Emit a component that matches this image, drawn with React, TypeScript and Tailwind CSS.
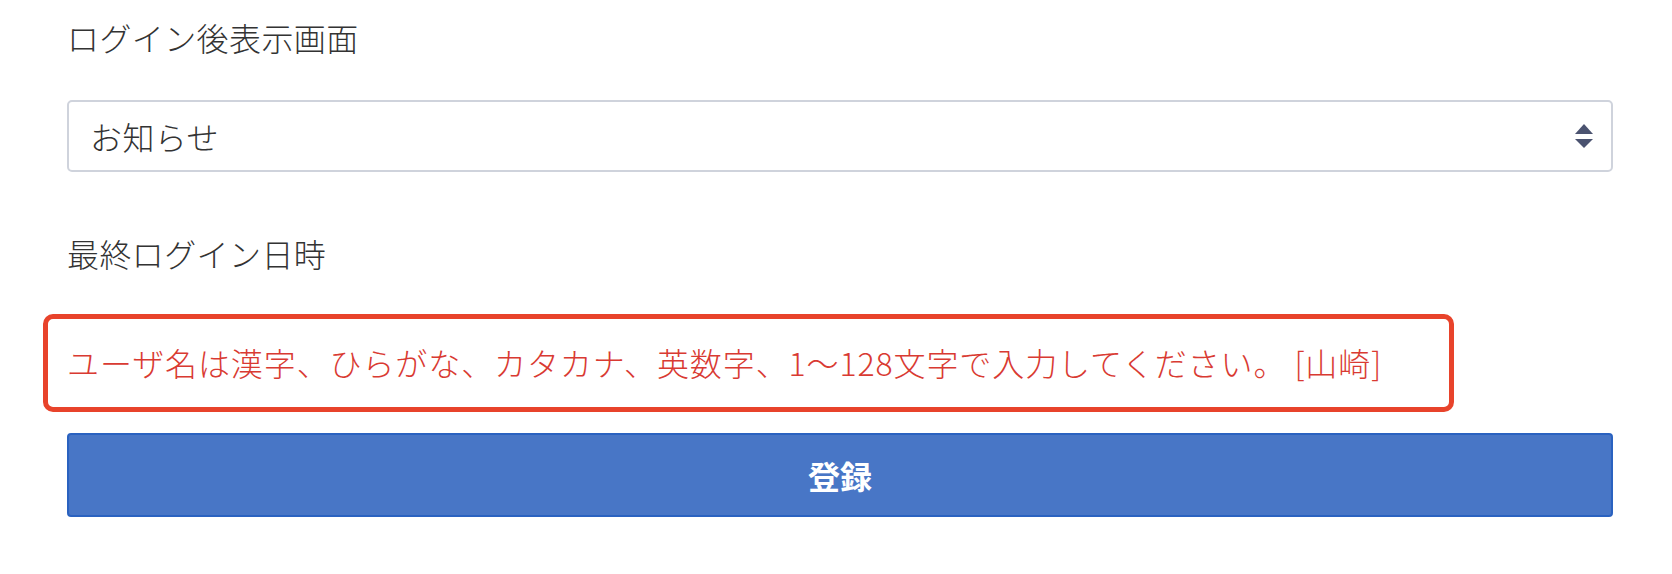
import React from 'react';

const SelectArrows: React.FC = () => (
  <svg width="18" height="24" viewBox="0 0 18 24" className="shrink-0">
    <path d="M9 0 L18 10 L0 10 Z" fill="#4b5370" />
    <path d="M0 15 L18 15 L9 24 Z" fill="#4b5370" />
  </svg>
);

const App: React.FC = () => {
  return (
    <div
      className="w-[1672px] h-[574px] bg-white text-[#333333] overflow-hidden"
      style={{ fontFamily: '"Noto Sans CJK JP", "Noto Sans", sans-serif' }}
    >
      <div className="ml-[67px] w-[1546px] pt-[13px] flex flex-col">
        <label className="text-[32px] leading-[48px] font-light tracking-[0.4px]">ログイン後表示画面</label>

        <div className="mt-[39px] h-[72px] flex items-center justify-between pl-[21px] pr-[18px] border-2 border-[#cfd3dc] rounded-[5px] bg-white">
          <span className="text-[32px] leading-[48px] font-light tracking-[0.4px]">お知らせ</span>
          <SelectArrows />
        </div>

        <label className="mt-[57px] text-[32px] leading-[48px] font-light tracking-[0.4px]">最終ログイン日時</label>

        {/* error message with red annotation frame */}
        <div className="relative mt-[61px]">
          <p className="text-[32px] leading-[48px] font-light tracking-[0.9px] text-[#d93a32] whitespace-nowrap">
            ユーザ名は漢字、ひらがな、カタカナ、英数字、1～128文字で入力してください。 [山崎]
          </p>
          <div className="absolute left-[-24px] top-[-24px] bottom-[-26px] w-[1411px] border-[5px] border-[#e8432b] rounded-[10px] pointer-events-none" />
        </div>

        <button className="mt-[47px] h-[84px] w-full bg-[#4876c6] border-2 border-[#2a62c0] rounded-[4px] text-white text-[32px] font-bold">
          登録
        </button>
      </div>
    </div>
  );
};

export default App;
